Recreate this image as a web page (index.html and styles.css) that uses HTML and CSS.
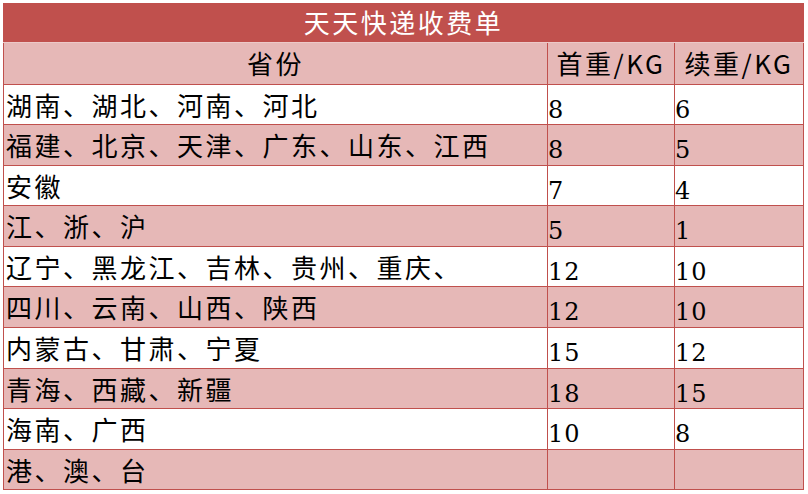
FILE: index.html
```html
<!DOCTYPE html>
<html lang="zh-CN">
<head>
<meta charset="utf-8">
<title>天天快递收费单</title>
<link rel="stylesheet" href="styles.css">
</head>
<body>
<table class="fee">
  <colgroup>
    <col class="c-prov">
    <col class="c-first">
    <col class="c-next">
  </colgroup>
  <thead>
    <tr class="title-row"><th colspan="3" class="title">天天快递收费单</th></tr>
    <tr class="head-row">
      <th class="head">省份</th>
      <th class="head">首重/KG</th>
      <th class="head">续重/KG</th>
    </tr>
  </thead>
  <tbody>
    <tr class="r40"><td class="prov">湖南、湖北、河南、河北</td><td class="num">8</td><td class="num">6</td></tr>
    <tr class="r41 alt"><td class="prov">福建、北京、天津、广东、山东、江西</td><td class="num">8</td><td class="num">5</td></tr>
    <tr class="r40"><td class="prov">安徽</td><td class="num">7</td><td class="num">4</td></tr>
    <tr class="r41 alt"><td class="prov">江、浙、沪</td><td class="num">5</td><td class="num">1</td></tr>
    <tr class="r40"><td class="prov">辽宁、黑龙江、吉林、贵州、重庆、</td><td class="num">12</td><td class="num">10</td></tr>
    <tr class="r41 alt"><td class="prov">四川、云南、山西、陕西</td><td class="num">12</td><td class="num">10</td></tr>
    <tr class="r41"><td class="prov">内蒙古、甘肃、宁夏</td><td class="num">15</td><td class="num">12</td></tr>
    <tr class="r40 alt"><td class="prov">青海、西藏、新疆</td><td class="num">18</td><td class="num">15</td></tr>
    <tr class="r41"><td class="prov">海南、广西</td><td class="num">10</td><td class="num">8</td></tr>
    <tr class="r40 alt"><td class="prov">港、澳、台</td><td class="num"></td><td class="num"></td></tr>
  </tbody>
</table>
</body>
</html>
```

FILE: styles.css
```css
html, body {
  margin: 0;
  padding: 0;
  background: #ffffff;
}

.fee {
  margin: 3px 0 0 3px;
  width: 800px;
  table-layout: fixed;
  border-collapse: collapse;
  font-family: "Noto Sans CJK SC", "Noto Sans", sans-serif;
  color: #000000;
}

.c-prov { width: 544px; }
.c-first { width: 127px; }
.c-next { width: 129px; }

.fee th,
.fee td {
  padding: 0;
  border: 1px solid #c0504d;
  overflow: hidden;
  white-space: nowrap;
  vertical-align: top;
}

.title-row { height: 39px; }
.fee .title {
  background: #c0504d;
  color: #ffffff;
  font-weight: normal;
  font-size: 26px;
  letter-spacing: 2.5px;
  line-height: 36px;
  text-align: center;
  border-bottom: 1px solid #ecc9c8;
}

.head-row { height: 42px; }
.fee .head {
  background: #e6b8b7;
  font-weight: normal;
  font-size: 26px;
  letter-spacing: 2.5px;
  line-height: 39px;
  text-align: center;
  border-top: 1px solid #ecc9c8;
}

.r40 { height: 40px; }
.r41 { height: 41px; }
.alt { background: #e6b8b7; }

.fee .prov {
  font-size: 26px;
  letter-spacing: 2.5px;
  line-height: 38px;
  padding: 1px 0 0 2px;
}

.fee .num {
  font-family: "DejaVu Serif", "Liberation Serif", serif;
  font-size: 24px;
  letter-spacing: 1px;
  line-height: 28px;
  padding: 11px 0 0 0;
}
```
